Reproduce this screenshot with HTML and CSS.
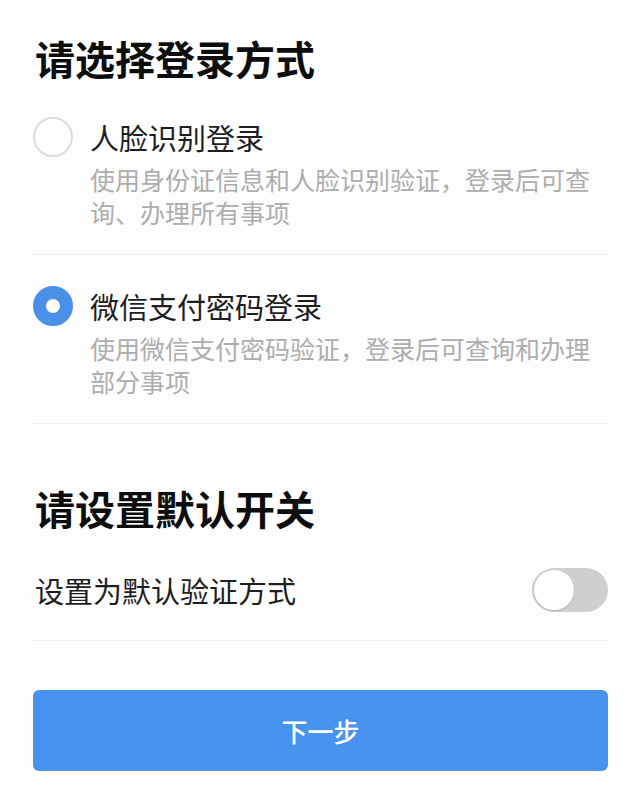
FILE: index.html
```html
<!DOCTYPE html>
<html lang="zh-CN">
<head>
  <meta charset="UTF-8" />
  <meta name="viewport" content="width=device-width, initial-scale=1.0"/>
  <title>选择登录方式</title>
  <link rel="stylesheet" href="styles.css">
</head>
<body>

  <div class="page">
    <h2 class="section-title">请选择登录方式</h2>

    <div class="option">
      <span class="radio"></span>
      <div class="option-text">
        <div class="option-label">人脸识别登录</div>
        <div class="option-desc">使用身份证信息和人脸识别验证，登录后可查询、办理所有事项</div>
      </div>
    </div>

    <div class="option">
      <span class="radio checked"></span>
      <div class="option-text">
        <div class="option-label">微信支付密码登录</div>
        <div class="option-desc">使用微信支付密码验证，登录后可查询和办理部分事项</div>
      </div>
    </div>

    <h2 class="section-title second">请设置默认开关</h2>

    <div class="switch-row">
      <span class="switch-label">设置为默认验证方式</span>
      <span class="switch"><span class="knob"></span></span>
    </div>

    <button class="next-btn">下一步</button>
  </div>

</body>
</html>
```

FILE: styles.css
```css
body {
  margin: 0;
  background-color: #fdfdfd;
  color: #1a1a1a;
  font-family: "Noto Sans CJK SC", "Noto Sans", sans-serif;
}

.page {
  padding: 30px 32px 0 33px;
}

.section-title {
  margin: 0;
  font-size: 40px;
  line-height: 56px;
  font-weight: 700;
  color: #0d0d0d;
  padding-left: 2px;
}

.section-title.second {
  margin-top: 56px;
}

.option {
  display: flex;
  align-items: flex-start;
  gap: 17px;
  padding: 31px 0 25px;
  border-bottom: 1px solid #efefef;
}

.radio {
  flex: none;
  width: 40px;
  height: 40px;
  box-sizing: border-box;
  border-radius: 50%;
  border: 2px solid #dcdcdc;
  background: #fff;
}

.radio.checked {
  border: 13px solid #4a90e8;
}

.option-text {
  flex: 1;
}

.option-label {
  font-size: 29px;
  line-height: 40px;
  color: #1e1e1e;
}

.option-desc {
  margin-top: 6px;
  font-size: 25px;
  line-height: 33px;
  color: #adadad;
}

.switch-row {
  display: flex;
  justify-content: space-between;
  align-items: center;
  margin-top: 32px;
  padding-bottom: 28px;
  border-bottom: 1px solid #efefef;
}

.switch-label {
  font-size: 29px;
  line-height: 44px;
  color: #1e1e1e;
  padding-left: 2px;
}

.switch {
  display: flex;
  width: 76px;
  height: 44px;
  border-radius: 22px;
  background: #cfcfd2;
  padding: 2px;
  box-sizing: border-box;
}

.knob {
  width: 40px;
  height: 40px;
  border-radius: 50%;
  background: #fff;
  box-shadow: 0 1px 2px rgba(0, 0, 0, 0.15);
}

.next-btn {
  display: block;
  width: 100%;
  height: 81px;
  margin-top: 49px;
  border: none;
  border-radius: 6px;
  background: #4893ef;
  color: #fff;
  font-family: inherit;
  font-size: 26px;
  font-weight: 500;
}
```
